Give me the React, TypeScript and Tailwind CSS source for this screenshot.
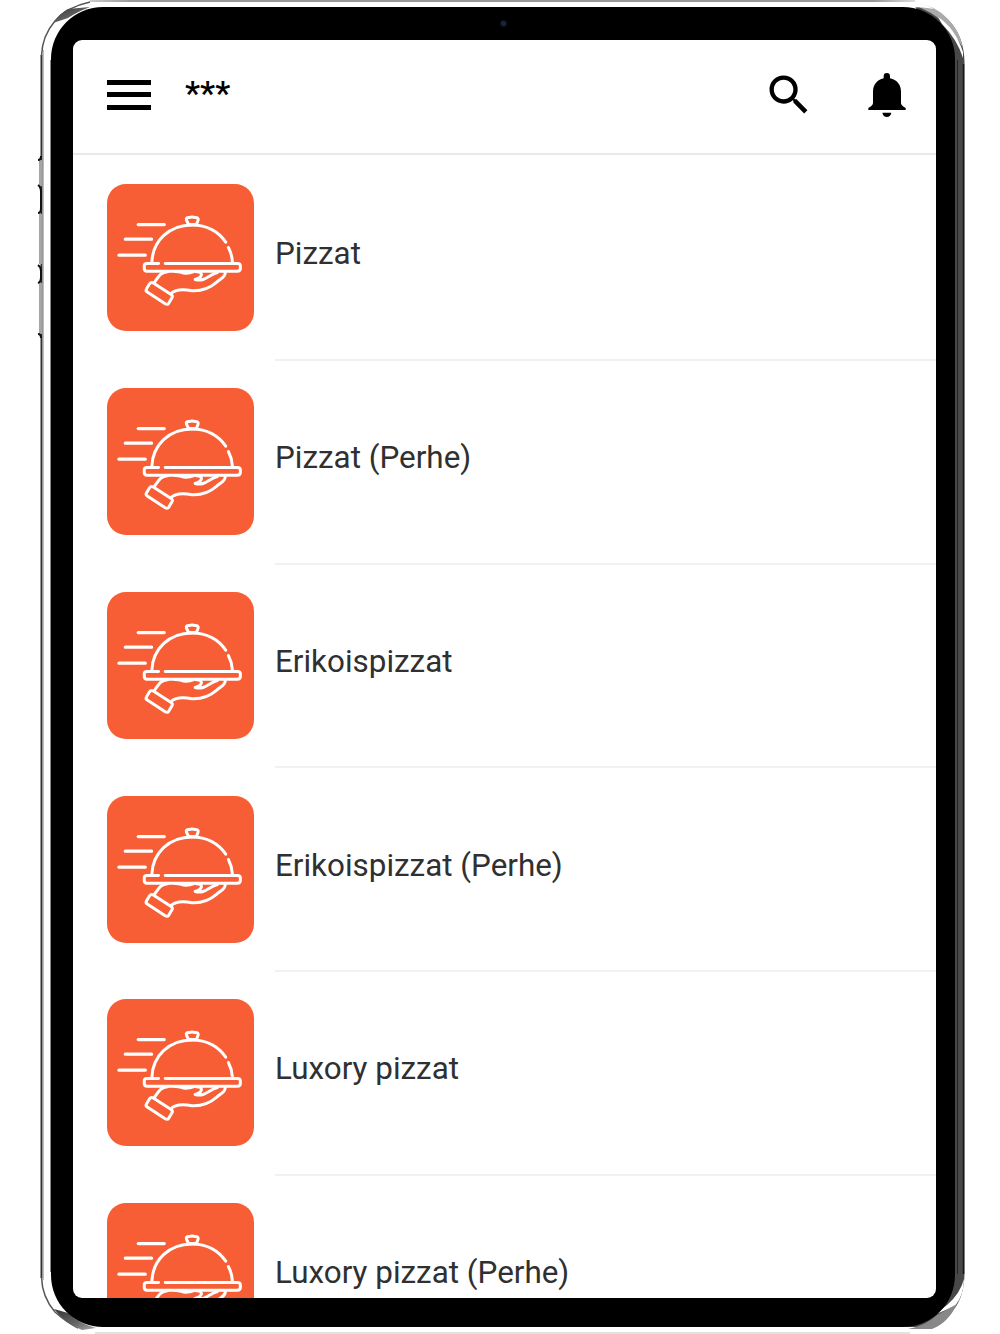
import React from "react";
import { MdSearch } from "react-icons/md";

const CATEGORIES: string[] = [
  "Pizzat",
  "Pizzat (Perhe)",
  "Erikoispizzat",
  "Erikoispizzat (Perhe)",
  "Luxory pizzat",
  "Luxory pizzat (Perhe)",
];

const ServingIcon: React.FC = () => (
  <svg
    className="w-[147px] h-[147px] shrink-0 rounded-[19px] bg-[#f85e35]"
    viewBox="20 18 442 442"
    fill="none"
    stroke="#fff"
    strokeWidth={9}
    strokeLinecap="round"
    strokeLinejoin="round"
  >
    <path strokeWidth={10} d="M114 140H192M75 184H154M56 232H135" />
    <path d="M265 139L259 127Q256 119 266 119Q276 116 286 119Q296 119 294 127L289 139Q277 142 265 139Z" />
    <path d="M155 252C158 190 205 141 276 141C320 141 356 162 377 193M385 209Q396 230 397 252" />
    <path d="M175 257H140Q132 257 132 264V271Q132 280 140 280H412Q421 280 421 271V264Q421 257 412 257H195" />
    <path d="M163 313C173 300 180 283 202 282M225 281C240 280 247 288 258 286Q270 286 279 282M288 282Q304 282 304 291Q302 301 285 305C315 313 326 291 352 284M375 283C379 294 363 302 350 313C327 333 299 340 276 339C246 333 225 334 212 348" />
    <path d="M158 315L213 350Q219 354 215 361L206 376Q202 382 195 378L141 343Q135 339 139 333L148 318Q152 312 158 315Z" />
  </svg>
);

const MenuIcon: React.FC = () => (
  <div className="flex flex-col justify-between w-[44px] h-[30px]">
    <span className="h-[5px] bg-black" />
    <span className="h-[5px] bg-black" />
    <span className="h-[5px] bg-black" />
  </div>
);

const BellIcon: React.FC = () => (
  <svg className="w-[38px] h-[44px]" viewBox="384 219 114 132">
    <path d="M431 235V229Q431 219 440.500 219Q450 219 450 229V235C471 240 483 254 483 275V309Q483 316 497 324V330H385V324Q399 316 399 309V275C399 254 411 240 431 235Z" />
    <path d="M427 338H454Q451 351 440.500 351Q430 351 427 338Z" />
  </svg>
);

// metal rim and side buttons around the black body
const TabletFrame: React.FC = () => (
  <svg
    className="absolute inset-0 w-[1000px] h-[1334px]"
    viewBox="0 0 1000 1334"
    fill="none"
  >
    <defs>
      <linearGradient id="shade" x1="0" x2="1" y1="0" y2="1">
        <stop offset="0" stopColor="#333" />
        <stop offset=".6" stopColor="#666" />
        <stop offset="1" stopColor="#aaa" />
      </linearGradient>
      <linearGradient id="topLine" x1="0" x2="1" y1="0" y2="0">
        <stop offset="0" stopColor="#ccc" />
        <stop offset=".05" stopColor="#999" />
        <stop offset=".95" stopColor="#999" />
        <stop offset="1" stopColor="#ddd" />
      </linearGradient>
    </defs>
    <path fill="url(#topLine)" d="M90 0H915V2H90Z" />
    <path fill="#e2e2e2" d="M95 1332H910V1334H95Z" />

    {/* left edge */}
    <path stroke="#333" strokeWidth={2} d="M41.500 55V1278" />
    <path
      stroke="#555"
      strokeWidth={1.500}
      d="M41.500 56Q42 36 55 21Q67 7 90 2M41.500 1277Q42 1297 55 1312Q66 1322 78 1328"
    />
    <path stroke="#bbb" strokeWidth={1} d="M43.500 50V1280" />
    <path fill="url(#shade)" d="M53 23Q60 13 68 9L90 7Q77 12 68 18Z" />
    <path fill="url(#shade)" d="M54 1309L68 1313Q78 1323 96 1328L82 1330Q66 1324 54 1309Z" />

    {/* right edge */}
    <path
      fill="#484848"
      d="M914 4Q938 8 951 23Q964 38 964.500 62V1274Q964 1297 954 1309Q942 1324 932 1327H905V1300L940 1270V60Z"
    />
    <path stroke="#151515" strokeWidth={1.500} d="M963.500 64V1274" />
    <path stroke="#222" strokeWidth={1} d="M957.500 60V1274" />
    <path
      fill="#aaa"
      d="M913 2Q935 5 948 19Q960 31 963 48L954 34Q942 17 921 8Z"
    />
    <path
      fill="#fff"
      d="M938 17Q955 28 963 52V58Q957 39 942 24Z"
    />
    <path fill="#fff" d="M905 2H916Q926 4 934 9Q926 7 905 7Z" />
    <path
      fill="#fff"
      d="M964 1279Q960 1294 947 1305L934 1315L955 1306Q964 1295 964 1279Z"
    />
    <path fill="#888" d="M957 1304Q948 1323 932 1329H908Q925 1326 937 1315Z" />

    {/* volume and power buttons */}
    <path stroke="#a5a5a5" strokeWidth={3} d="M40.500 160V186M40.500 214V264M40.500 283V334" />
    <path
      stroke="#111"
      strokeWidth={2}
      d="M38 160Q41 160 41 156M38 185Q41 187 41 192V208Q41 213 38 213M38 265Q41 267 41 271V277Q41 282 38 283M38 334Q41 334 41 338"
    />
    <path stroke="#888" strokeWidth={1} d="M50.500 60V1272" />
  </svg>
);

const Header: React.FC = () => (
  <header className="flex items-center shrink-0 h-[115px] pl-[34px] pr-[30px] pb-1 border-b-2 border-[#e9e9e9]">
    <MenuIcon />
    <h1 className="ml-[34px] pb-1 text-[34px] leading-none font-medium text-black">
      ***
    </h1>
    <MdSearch className="ml-auto mr-[53px] w-[52px] h-[52px] text-black" />
    <BellIcon />
  </header>
);

const CategoryRow: React.FC<{ name: string }> = ({ name }) => (
  <li className="flex items-center shrink-0 h-[203.75px] pl-[34px]">
    <ServingIcon />
    <div className="relative top-px flex items-center flex-1 h-full ml-[21px] pb-2 border-b-2 border-[#f1f1f1]">
      <span className="text-[31.4px] text-[#303030] whitespace-nowrap">
        {name}
      </span>
    </div>
  </li>
);

const App: React.FC = () => {
  return (
    <div
      className={
        "relative w-[1000px] h-[1334px] overflow-hidden bg-white font-['Roboto',sans-serif]"
      }
    >
      <TabletFrame />
      <div className="relative w-[904px] h-[1334px] ml-[51px] pt-[7px]">
        <div className="relative h-[1320px] pt-[33px] pl-[22px] pr-[19px] rounded-[52px] bg-black">
          <span className="absolute top-[13px] left-[449px] w-[7px] h-[7px] rounded-full bg-[#1c2233] border border-[#0d1324]" />
          <main className="flex flex-col h-[1258px] overflow-hidden rounded-[9px] bg-white">
            <Header />
            <ul className="flex flex-col pt-[1px]">
              {CATEGORIES.map((name) => (
                <CategoryRow key={name} name={name} />
              ))}
            </ul>
          </main>
        </div>
      </div>
    </div>
  );
};

export default App;
